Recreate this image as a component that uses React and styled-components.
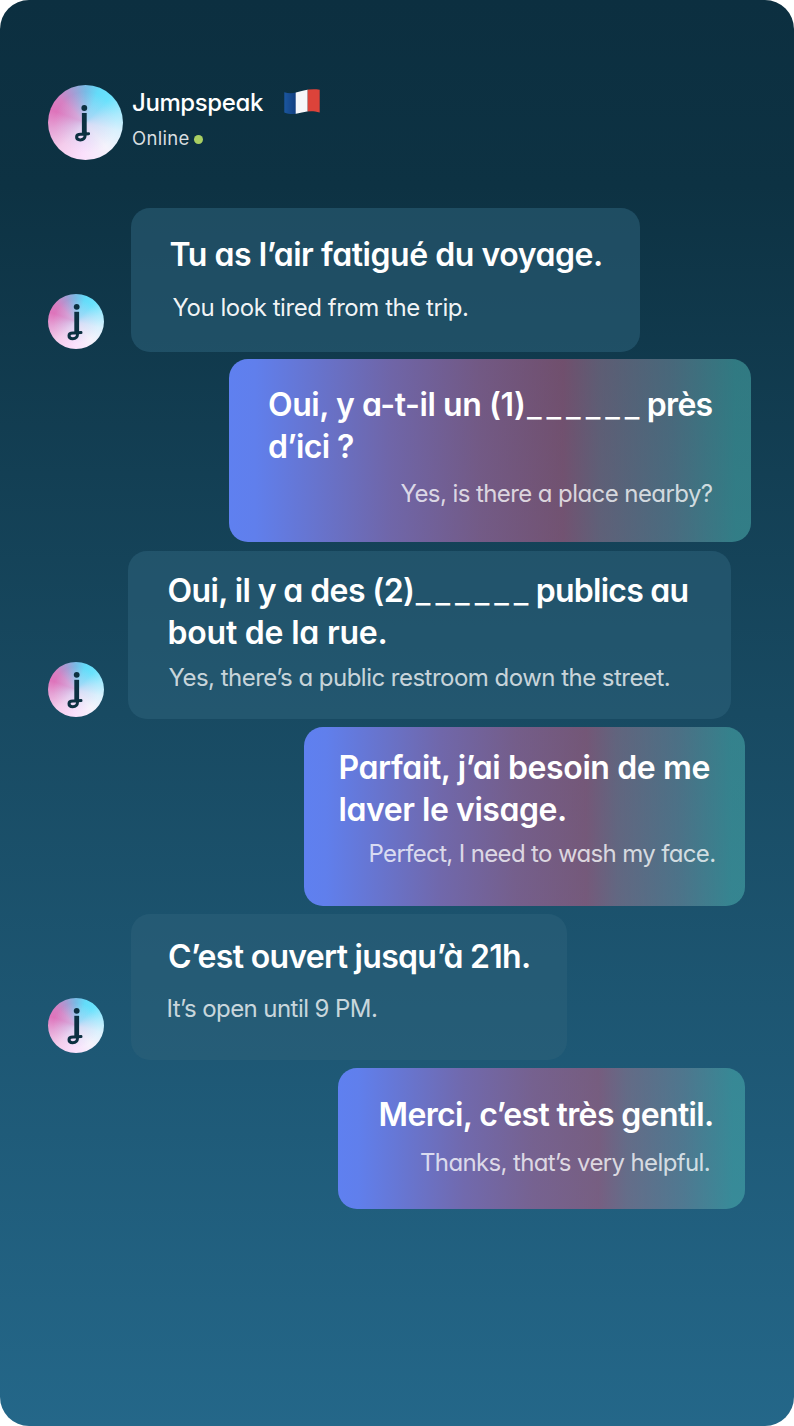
import React from 'react';
import { styled, createGlobalStyle } from 'styled-components';

const colors = {
  ink: '#0c3041',
  bubble: 'rgba(44, 97, 121, .57)',
  online: '#a9cf62',
  white: '#fff'
};

const GlobalStyle = createGlobalStyle`
  * {
    box-sizing: border-box;
  }

  body {
    margin: 0;
    background-color: ${colors.white};
  }
`;

const Screen = styled.main`
  width: 794px;
  height: 1426px;
  padding: 85px 43px 0 48px;
  border-radius: 29px;
  overflow: hidden;
  color: ${colors.white};
  background: linear-gradient(180deg, #0c2f40 0%, #0d3243 13%, #184a62 50%, #246789 100%);
  font-family: Inter, 'Open Sans', sans-serif;
  font-feature-settings: 'cv11' 1;
`;

const Header = styled.header`
  display: flex;
  height: 123px;
`;

const HeaderText = styled.div`
  margin-left: 9px;
  padding-top: 2px;
`;

const NameRow = styled.div`
  display: flex;
`;

const Name = styled.h1`
  margin: 0;
  font-size: 24px;
  font-weight: 500;
  line-height: 32px;
  letter-spacing: -.4px;
`;

const Flag = styled.svg`
  width: 36px;
  height: 26px;
  margin: 2px 0 0 21px;
`;

const Status = styled.div`
  display: flex;
  align-items: center;
  margin-top: 7px;
  font-size: 18.5px;
  line-height: 24px;
  letter-spacing: .3px;
  color: rgba(255, 255, 255, .85);
`;

const StatusDot = styled.span`
  width: 9px;
  height: 9px;
  margin: 2px 0 0 4px;
  border-radius: 50%;
  background-color: ${colors.online};
`;

const AvatarCircle = styled.div`
  flex: none;
  width: ${p => (p.$large ? 75 : 56)}px;
  height: ${p => (p.$large ? 75 : 55)}px;
  margin-bottom: ${p => p.$lift || 0}px;
  border-radius: 50%;
  background:
    radial-gradient(circle, rgba(208, 208, 242, .75) 0%, rgba(214, 212, 244, 0) 58%),
    conic-gradient(
      #78bbe5 0deg,
      #63dcf9 22deg,
      #6ae2fc 45deg,
      #a9eafd 75deg,
      #dbf1fd 105deg,
      #f5f3fc 140deg,
      #fbe0fc 185deg,
      #f4cdec 225deg,
      #e5a2d5 260deg,
      #de74bb 290deg,
      #d680c2 312deg,
      #ab99d2 335deg,
      #78bbe5 360deg
    );

  svg {
    display: block;
    width: 100%;
    height: 100%;
  }
`;

const Messages = styled.section`
  display: flex;
  flex-direction: column;
`;

const Row = styled.div`
  display: flex;
  align-items: flex-end;
  justify-content: ${p => (p.$mine ? 'flex-end' : 'flex-start')};
  margin-top: ${p => p.$top || 0}px;
  padding-right: ${p => p.$right || 0}px;
`;

const Bubble = styled.div`
  width: ${p => p.$w}px;
  height: ${p => p.$h}px;
  margin-left: ${p => p.$gap || 0}px;
  padding: ${p => p.$pad};
  border-radius: 19px;
  background: ${colors.bubble};
`;

const MyBubble = styled(Bubble)`
  background: linear-gradient(
    90deg,
    rgb(95, 128, 240) 0%,
    rgb(96, 127, 236) 5%,
    rgba(124, 107, 180, .88) 31%,
    rgba(150, 100, 152, .73) 48%,
    rgba(187, 96, 134, .56) 64%,
    rgba(158, 122, 148, .54) 71%,
    rgba(122, 146, 164, .52) 85%,
    rgba(78, 180, 178, .52) 97%
  );
`;

const Phrase = styled.p`
  margin: 0;
  font-size: 32px;
  font-weight: 600;
  line-height: 42px;
  white-space: nowrap;
`;

const Words = styled.span`
  letter-spacing: ${p => p.$track}px;
`;

const Blank = styled.span`
  position: relative;
  top: 1px;
  margin: 0 -5px 0 1.5px;
  letter-spacing: 5px;
  font-weight: 400;
`;

const Translation = styled.p`
  margin: ${p => p.$top}px ${p => p.$right || 0}px 0 ${p => p.$left || 0}px;
  font-size: 24px;
  line-height: 32px;
  letter-spacing: ${p => p.$track}px;
  text-align: ${p => (p.$end ? 'right' : 'left')};
  white-space: nowrap;
  color: rgba(255, 255, 255, ${p => p.$alpha || .77});
`;

const Avatar = ({ large, lift }) => (
  <AvatarCircle $large={large} $lift={lift}>
    <svg viewBox={large ? '-7.6 -10.2 75 75' : '0 0 56 55'} fill="none" stroke={colors.ink}>
      <circle cx="28.7" cy="12.8" r="2.9" fill={colors.ink} stroke="none" />
      <path d="M28.7 17.8V38" strokeWidth="4.8" />
      <path
        d="M29.6 37.5V40C29.4 43.4 27.2 44.7 24.7 44.7C22.4 44.7 21 43.5 21 41.8C21 39.9 22.6 39.1 25 39.1C28 39.1 30 38.7 33 38.5"
        strokeWidth="3"
        strokeLinecap="round"
      />
    </svg>
  </AvatarCircle>
);

const FrenchFlag = () => (
  <Flag viewBox="0 0 36 26">
    <defs>
      <clipPath id="wave">
        <path d="M.3 3.3C4 4.3 8 4.5 12 3.6C18 2.2 25-.8 35.7.8V23.6C26 20.6 19 23.4 12 24.8C8 25.3 4 24.9.3 23.5Z" />
      </clipPath>
      <linearGradient id="navy">
        <stop offset="0" stopColor="#1b57a0" />
        <stop offset="1" stopColor="#123f80" />
      </linearGradient>
    </defs>
    <g clipPath="url(#wave)">
      <path fill="url(#navy)" d="M0 0h12v26H0z" />
      <path fill="#f6f7fa" d="M11.7 0h12v26h-12z" />
      <path fill="#dc433a" d="M23.7 0H36v26H23.7z" />
    </g>
  </Flag>
);

const App = () => {
  return (
    <Screen>
      <GlobalStyle />
      <Header>
        <Avatar large />
        <HeaderText>
          <NameRow>
            <Name>Jumpspeak</Name>
            <FrenchFlag />
          </NameRow>
          <Status>
            Online<StatusDot />
          </Status>
        </HeaderText>
      </Header>
      <Messages>
        <Row>
          <Avatar lift={3} />
          <Bubble $w={509} $h={144} $gap={27} $pad="26px 0 0 38.5px">
            <Phrase><Words $track={-.454}>Tu as l’air fatigué du voyage.</Words></Phrase>
            <Translation $top={16} $left={3} $track={-.454} $alpha={.95}>You look tired from the trip.</Translation>
          </Bubble>
        </Row>
        <Row $mine $top={7}>
          <MyBubble $w={522} $h={183} $pad="25px 38.5px 0 39px">
            <Phrase>
              <Words $track={-.44}>Oui, y a-t-il un (1)</Words>
              <Blank>______</Blank>
              <Words $track={-.7}> près</Words>
              <br />
              <Words $track={-.638}>d’ici ?</Words>
            </Phrase>
            <Translation $end $top={10} $track={-.58}>Yes, is there a place nearby?</Translation>
          </MyBubble>
        </Row>
        <Row $top={9}>
          <Avatar lift={2} />
          <Bubble $w={603} $h={168} $gap={24} $pad="19px 0 0 39.5px">
            <Phrase>
              <Words $track={-.601}>Oui, il y a des (2)</Words>
              <Blank>______</Blank>
              <Words $track={-.75}> publics au</Words>
              <br />
              <Words $track={-.213}>bout de la rue.</Words>
            </Phrase>
            <Translation $top={8} $left={1} $track={-.52}>Yes, there’s a public restroom down the street.</Translation>
          </Bubble>
        </Row>
        <Row $mine $top={8} $right={6}>
          <MyBubble $w={441} $h={179} $pad="20px 29.5px 0 34.5px">
            <Phrase>
              <Words $track={-.38}>Parfait, j’ai besoin de me</Words>
              <br />
              <Words $track={-.448}>laver le visage.</Words>
            </Phrase>
            <Translation $end $top={7} $track={-.64}>Perfect, I need to wash my face.</Translation>
          </MyBubble>
        </Row>
        <Row $top={8}>
          <Avatar lift={7} />
          <Bubble $w={436} $h={146} $gap={27} $pad="22px 0 0 37px">
            <Phrase><Words $track={-.697}>C’est ouvert jusqu’à 21h.</Words></Phrase>
            <Translation $top={15} $left={-1.5} $track={-.562}>It’s open until 9 PM.</Translation>
          </Bubble>
        </Row>
        <Row $mine $top={8} $right={6}>
          <MyBubble $w={407} $h={141} $pad="26px 35px 0 40.5px">
            <Phrase><Words $track={-.63}>Merci, c’est très gentil.</Words></Phrase>
            <Translation $end $top={11} $track={-.63}>Thanks, that’s very helpful.</Translation>
          </MyBubble>
        </Row>
      </Messages>
    </Screen>
  );
};

export default App;
